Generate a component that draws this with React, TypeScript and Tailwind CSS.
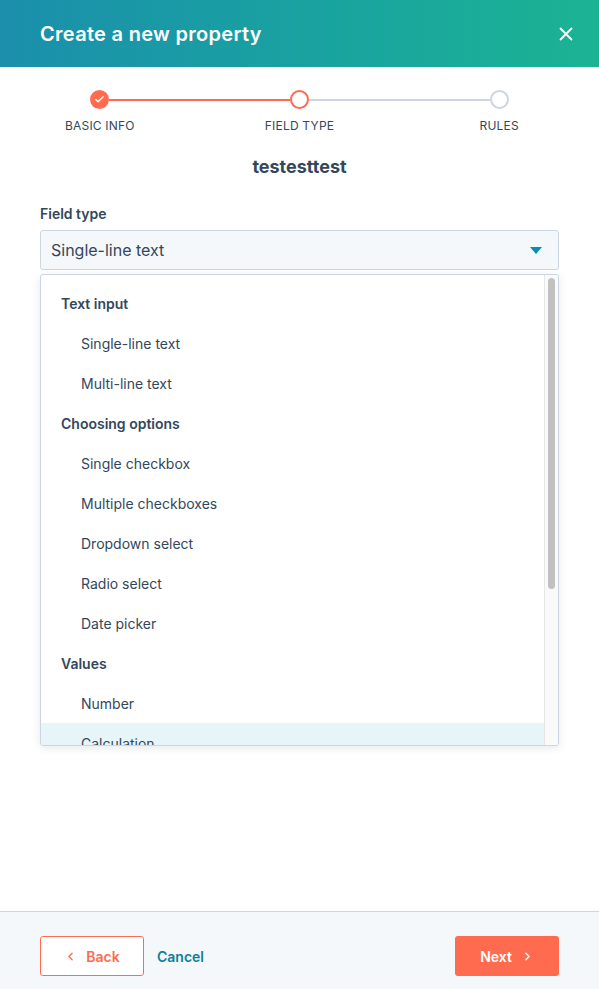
import React from "react";
import { X, Check, ChevronLeft, ChevronRight } from "lucide-react";

// Option groups shown in the open field type menu
const groups = [
	{ label: "Text input", items: ["Single-line text", "Multi-line text"] },
	{ label: "Choosing options", items: ["Single checkbox", "Multiple checkboxes", "Dropdown select", "Radio select", "Date picker"] },
	{ label: "Values", items: ["Number", "Calculation"] },
];

function Step({ label, state, left, right }: { label: string; state: "done" | "active" | "todo"; left: string; right: string }) {
	return (
		<div className="flex flex-col items-center">
			<div className="flex w-full items-center">
				<div className={`h-[2px] flex-1 ${left}`} />
				{state === "done" && (
					<div className="flex h-[19px] w-[19px] items-center justify-center rounded-full bg-[#ff6b4f]">
						<Check className="h-[11px] w-[11px] text-white" strokeWidth={3} />
					</div>
				)}
				{state === "active" && <div className="h-[19px] w-[19px] rounded-full border-2 border-[#ff6b4f] bg-white" />}
				{state === "todo" && <div className="h-[19px] w-[19px] rounded-full border-2 border-[#cbd6e2] bg-white" />}
				<div className={`h-[2px] flex-1 ${right}`} />
			</div>
			<div className="mt-[9px] text-[12px] leading-4 tracking-[0.2px] text-[#33475b]">{label}</div>
		</div>
	);
}

export default function App() {
	return (
		<div className="flex h-[989px] w-[599px] flex-col overflow-hidden bg-white font-['Inter',sans-serif] text-[#33475b]">
			{/* Header */}
			<div className="flex h-[67px] shrink-0 items-center justify-between bg-gradient-to-r from-[#1b8fac] to-[#1cb393] pl-10 pr-[22px]">
				<h1 className="text-[20px] font-semibold tracking-[0.3px] text-white">Create a new property</h1>
				<X className="h-[22px] w-[22px] text-white" strokeWidth={2} />
			</div>

			{/* Stepper */}
			<div className="mt-[23px] grid grid-cols-3">
				<Step label="BASIC INFO" state="done" left="bg-transparent" right="bg-[#ff6b4f]" />
				<Step label="FIELD TYPE" state="active" left="bg-[#ff6b4f]" right="bg-[#cbd6e2]" />
				<Step label="RULES" state="todo" left="bg-[#cbd6e2]" right="bg-transparent" />
			</div>

			{/* Body */}
			<div className="flex flex-1 flex-col px-10">
				<h2 className="mt-[21px] text-center text-[18px] font-bold leading-6">testesttest</h2>

				<label className="mt-[25px] text-[14px] font-semibold leading-5">Field type</label>
				<div className="mt-[6px] flex h-[40px] items-center justify-between rounded-[3px] border border-[#cbd6e2] bg-[#f5f8fa] pl-[10px] pr-4">
					<span className="text-[16px]">Single-line text</span>
					<svg width="12" height="7" viewBox="0 0 12 7">
						<path d="M0 0h12L6 7z" fill="#0091ae" />
					</svg>
				</div>

				{/* Open menu */}
				<div className="mt-[4px] flex h-[472px] overflow-hidden rounded-[3px] border border-[#cbd6e2] bg-white shadow-[0_2px_8px_rgba(45,62,80,0.12)]">
					<div className="flex-1 pt-[8px]">
						{groups.map((g) => (
							<div key={g.label}>
								<div className="flex h-10 items-center pl-5 text-[14px] font-semibold">{g.label}</div>
								{g.items.map((it) => (
									<div key={it} className={`flex h-10 items-center pl-10 text-[14px] ${it === "Calculation" ? "bg-[#e5f5f8]" : ""}`}>
										{it}
									</div>
								))}
							</div>
						))}
					</div>
					{/* Scrollbar */}
					<div className="w-[14px] shrink-0 border-l border-[#e6e6e6] bg-[#fafafa] px-[3px] pt-[3px]">
						<div className="h-[311px] rounded-full bg-[#c1c1c1]" />
					</div>
				</div>
			</div>

			{/* Footer */}
			<div className="flex h-[78px] shrink-0 items-start justify-between border-t border-[#cbd6e2] bg-[#f5f8fa] px-10 pt-6">
				<div className="flex items-center gap-[13px]">
					<button className="flex h-10 w-[104px] items-center justify-center gap-[9px] rounded-[3px] border border-[#ff6b4f] bg-white text-[14px] font-semibold text-[#ff6b4f]">
						<ChevronLeft className="h-[13px] w-[13px]" strokeWidth={2.5} />
						Back
					</button>
					<button className="text-[14px] font-semibold text-[#0e7f9b]">Cancel</button>
				</div>
				<button className="flex h-10 w-[104px] items-center justify-center gap-[9px] rounded-[3px] bg-[#ff6b4f] text-[14px] font-semibold text-white">
					Next
					<ChevronRight className="h-[13px] w-[13px]" strokeWidth={2.5} />
				</button>
			</div>
		</div>
	);
}
